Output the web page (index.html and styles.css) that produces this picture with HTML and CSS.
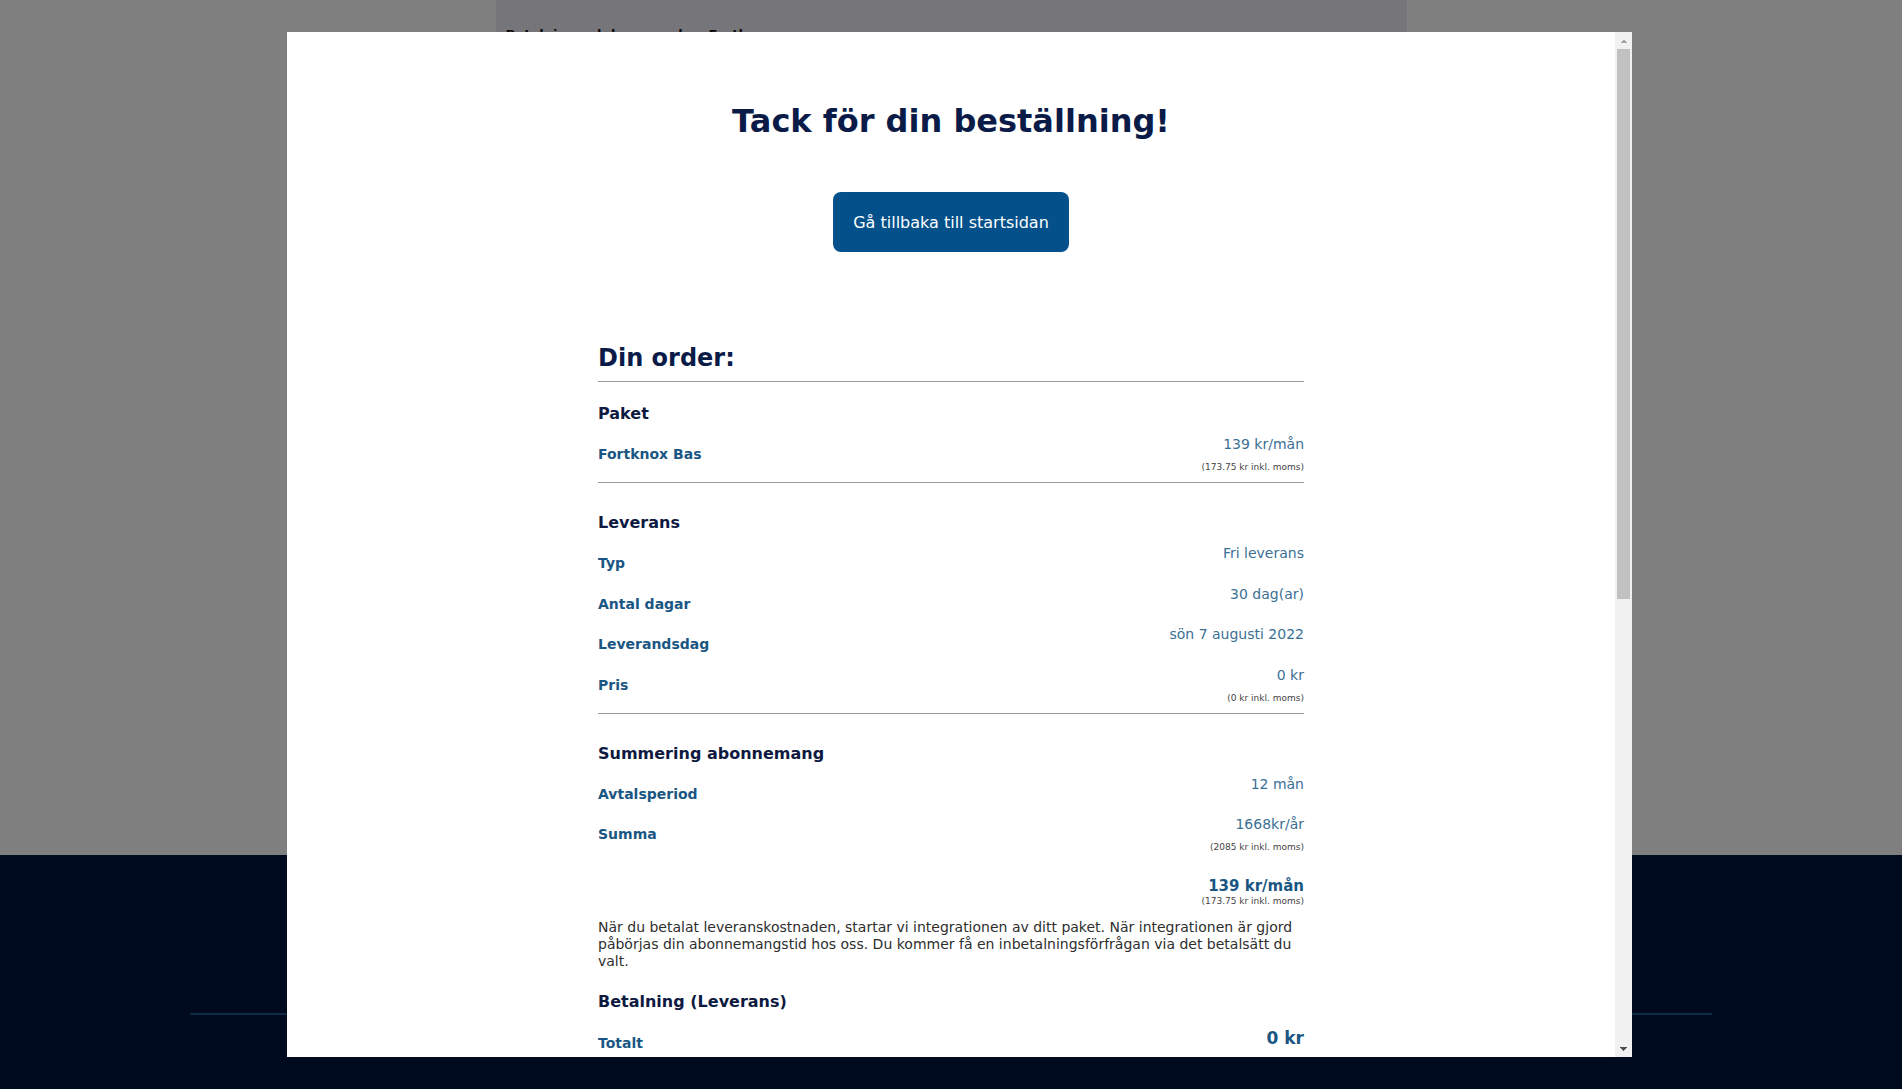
FILE: index.html
```html
<!DOCTYPE html>
<html lang="sv">
<head>
<meta charset="utf-8">
<title>Tack för din beställning</title>
<link rel="stylesheet" href="styles.css">
</head>
<body>
<div class="page">
  <main class="main">
    <div class="main-col">
      <p class="crumb">Betalning och leverans hos Fortknox</p>
    </div>
  </main>
  <footer class="footer">
    <div class="footer-line"></div>
  </footer>
</div>

<div class="overlay">
  <div class="modal">
    <div class="modal-body">
      <h1 class="title">Tack för din beställning!</h1>
      <a class="btn" href="#">Gå tillbaka till startsidan</a>

      <div class="order">
        <h2 class="order-title">Din order:</h2>

        <section class="sec sec-first">
          <h3 class="sec-title">Paket</h3>
          <div class="rows">
            <div class="row">
              <span class="label">Fortknox Bas</span>
              <div class="val"><div class="v">139 kr/mån</div><div class="tiny">(173.75 kr inkl. moms)</div></div>
            </div>
          </div>
        </section>

        <section class="sec">
          <h3 class="sec-title">Leverans</h3>
          <div class="rows">
            <div class="row"><span class="label">Typ</span><div class="val"><div class="v">Fri leverans</div></div></div>
            <div class="row"><span class="label">Antal dagar</span><div class="val"><div class="v">30 dag(ar)</div></div></div>
            <div class="row"><span class="label">Leverandsdag</span><div class="val"><div class="v">sön 7 augusti 2022</div></div></div>
            <div class="row"><span class="label">Pris</span><div class="val"><div class="v">0 kr</div><div class="tiny">(0 kr inkl. moms)</div></div></div>
          </div>
        </section>

        <section class="sec sec-open">
          <h3 class="sec-title">Summering abonnemang</h3>
          <div class="rows">
            <div class="row"><span class="label">Avtalsperiod</span><div class="val"><div class="v">12 mån</div></div></div>
            <div class="row"><span class="label">Summa</span><div class="val"><div class="v">1668kr/år</div><div class="tiny">(2085 kr inkl. moms)</div></div></div>
          </div>
          <div class="sum">
            <div class="sum-v">139 kr/mån</div>
            <div class="tiny tiny-tight">(173.75 kr inkl. moms)</div>
          </div>
          <p class="note">När du betalat leveranskostnaden, startar vi integrationen av ditt paket. När integrationen är gjord påbörjas din abonnemangstid hos oss. Du kommer få en inbetalningsförfrågan via det betalsätt du valt.</p>
        </section>

        <section class="sec sec-pay">
          <h3 class="sec-title">Betalning (Leverans)</h3>
          <div class="row row-total">
            <span class="label">Totalt</span>
            <div class="val"><div class="total-v">0 kr</div></div>
          </div>
        </section>
      </div>
    </div>

    <div class="scrollbar" aria-hidden="true">
      <div class="sb-btn sb-up"></div>
      <div class="sb-track"><div class="sb-thumb"></div></div>
      <div class="sb-btn sb-down"></div>
    </div>
  </div>
</div>
</body>
</html>
```

FILE: styles.css
```css
html, body {
  margin: 0;
  padding: 0;
}

body {
  font-family: "DejaVu Sans", Verdana, sans-serif;
  background: #ffffff;
  overflow: hidden;
}

/* underlying page */
.page {
  width: 1902px;
  height: 1089px;
}

.main {
  height: 855px;
  background: #ffffff;
}

.main-col {
  width: 911px;
  height: 855px;
  margin: 0 auto;
  background: #eceaf4;
  padding: 26px 10px 0;
  box-sizing: border-box;
}

.crumb {
  margin: 0;
  font-size: 13px;
  line-height: 17px;
  font-weight: bold;
  color: #161616;
}

.footer {
  height: 234px;
  background: #00143e;
  padding-top: 158px;
  box-sizing: border-box;
}

.footer-line {
  width: 1522px;
  height: 2px;
  margin: 0 auto;
  background: #1a5490;
}

/* overlay + modal */
.overlay {
  position: fixed;
  inset: 0;
  background: rgba(0, 0, 0, 0.5);
  display: flex;
  align-items: flex-start;
}

.modal {
  margin: 32px 0 0 287px;
  width: 1345px;
  height: 1025px;
  background: #ffffff;
  display: flex;
}

.modal-body {
  flex: 1;
  overflow: hidden;
  padding-top: 70px;
}

/* scrollbar */
.scrollbar {
  width: 17px;
  display: flex;
  flex-direction: column;
  background: #f1f1f1;
}

.sb-btn {
  height: 17px;
  background-repeat: no-repeat;
  background-size: 4px 4px;
  background-position: calc(50% - 2px) 50%, calc(50% + 2px) 50%;
}

.sb-up {
  background-image:
    linear-gradient(to top left, #a3a3a3 50%, transparent 50%),
    linear-gradient(to top right, #a3a3a3 50%, transparent 50%);
}

.sb-down {
  background-image:
    linear-gradient(to bottom left, #505050 50%, transparent 50%),
    linear-gradient(to bottom right, #505050 50%, transparent 50%);
}

.sb-track {
  flex: 1;
  padding: 0 2px;
}

.sb-thumb {
  height: 550px;
  background: #c1c1c1;
}

/* content */
.title {
  margin: 0;
  text-align: center;
  font-size: 32px;
  line-height: 38px;
  font-weight: bold;
  color: #0b1b48;
}

.btn {
  display: table;
  margin: 52px auto 0;
  padding: 21px 20px 19px;
  font-size: 16px;
  line-height: 20px;
  color: #ffffff;
  background: #03508a;
  border-radius: 8px;
  text-decoration: none;
}

.order {
  width: 706px;
  margin: 92px auto 0;
}

.order-title {
  margin: 0;
  font-size: 24px;
  line-height: 28px;
  font-weight: bold;
  color: #0b1b48;
  padding-bottom: 9px;
  border-bottom: 1px solid #9a9a9a;
}

.sec {
  padding: 30px 0 8px;
  border-bottom: 1px solid #9a9a9a;
}

.sec-first {
  padding-top: 22px;
}

.sec-open {
  border-bottom: none;
  padding-bottom: 0;
}

.sec-pay {
  padding-top: 22px;
  border-bottom: none;
}

.sec-title {
  margin: 0 0 13px;
  font-size: 16px;
  line-height: 19px;
  font-weight: bold;
  color: #0e1a3f;
}

.rows {
  display: flex;
  flex-direction: column;
  gap: 13.5px;
}

.row {
  display: flex;
  justify-content: space-between;
  align-items: flex-start;
}

.label {
  margin-top: 10px;
  font-size: 14px;
  line-height: 17px;
  font-weight: bold;
  color: #1a5683;
}

.val {
  text-align: right;
}

.v {
  font-size: 14px;
  line-height: 17px;
  color: #3b7095;
}

.tiny {
  margin-top: 8px;
  font-size: 9px;
  line-height: 13px;
  color: #444444;
}

.tiny-tight {
  margin-top: 0;
  line-height: 12px;
}

.sum {
  margin-top: 23px;
  text-align: right;
}

.sum-v {
  font-size: 15px;
  line-height: 18px;
  font-weight: bold;
  color: #1a5683;
}

.note {
  margin: 12px 0 0;
  font-size: 14px;
  line-height: 17px;
  color: #2e2e2e;
}

.row-total {
  margin-top: 17px;
}

.row-total .label {
  margin-top: 6.5px;
}

.total-v {
  font-size: 17px;
  line-height: 20px;
  font-weight: bold;
  color: #1a5683;
}
```
